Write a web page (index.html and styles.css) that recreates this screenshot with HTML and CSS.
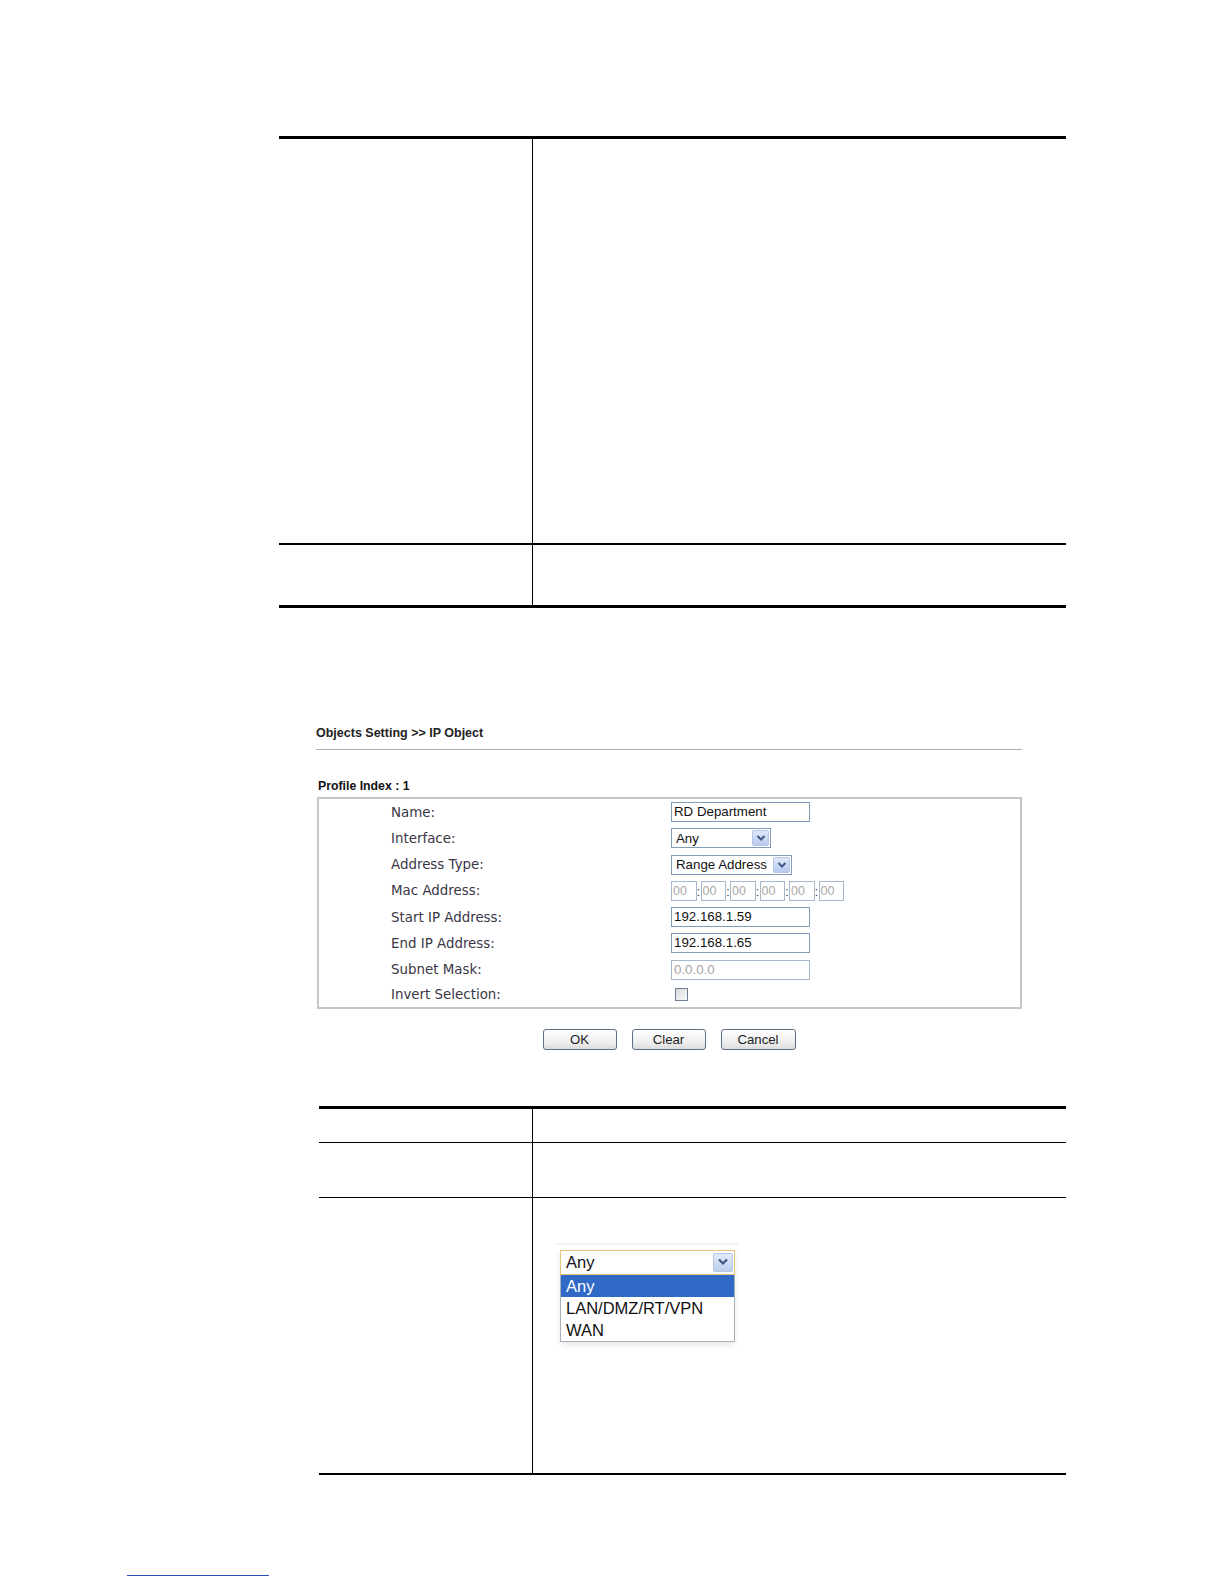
FILE: index.html
```html
<!DOCTYPE html>
<html>
<head>
<meta charset="utf-8">
<title>IP Object</title>
<link rel="stylesheet" href="styles.css">
</head>
<body>
<div class="page">
  <div class="spec spec-top">
    <div class="row r1"><div class="c1"></div><div class="c2"></div></div>
    <div class="row r2"><div class="c1"></div><div class="c2"></div></div>
  </div>

  <div class="shot">
    <div class="crumb">Objects Setting &gt;&gt; IP Object</div>
    <div class="profile">Profile Index : 1</div>
    <div class="form">
      <div class="frow"><span class="lbl">Name:</span><span class="val"><span class="field w137">RD Department</span></span></div>
      <div class="frow"><span class="lbl">Interface:</span><span class="val"><span class="sel w99"><span class="sel-text">Any</span><span class="arrow"><svg viewBox="0 0 10 8" width="10" height="8"><path d="M1.5 2 L5 5.5 L8.5 2" fill="none" stroke="#3f5584" stroke-width="2"/></svg></span></span></span></div>
      <div class="frow"><span class="lbl">Address Type:</span><span class="val"><span class="sel w119"><span class="sel-text">Range Address</span><span class="arrow"><svg viewBox="0 0 10 8" width="10" height="8"><path d="M1.5 2 L5 5.5 L8.5 2" fill="none" stroke="#3f5584" stroke-width="2"/></svg></span></span></span></div>
      <div class="frow"><span class="lbl">Mac Address:</span><span class="val mac"><span class="macbox">00</span><span class="colon">:</span><span class="macbox">00</span><span class="colon">:</span><span class="macbox">00</span><span class="colon">:</span><span class="macbox">00</span><span class="colon">:</span><span class="macbox">00</span><span class="colon">:</span><span class="macbox">00</span></span></div>
      <div class="frow"><span class="lbl">Start IP Address:</span><span class="val"><span class="field w137">192.168.1.59</span></span></div>
      <div class="frow"><span class="lbl">End IP Address:</span><span class="val"><span class="field w137">192.168.1.65</span></span></div>
      <div class="frow"><span class="lbl">Subnet Mask:</span><span class="val"><span class="field w137 disabled">0.0.0.0</span></span></div>
      <div class="frow last"><span class="lbl">Invert Selection:</span><span class="val"><span class="check"></span></span></div>
    </div>
    <div class="buttons">
      <span class="btn b74">OK</span>
      <span class="btn b74">Clear</span>
      <span class="btn b75">Cancel</span>
    </div>
  </div>

  <div class="spec spec-bottom">
    <div class="row q1"><div class="c1"></div><div class="c2"></div></div>
    <div class="row q2"><div class="c1"></div><div class="c2"></div></div>
    <div class="row q3"><div class="c1"></div>
      <div class="c2">
        <div class="dd-shot">
          <div class="dd-select"><span class="dd-text">Any</span><span class="dd-arrow"><svg viewBox="0 0 12 10" width="12" height="10"><path d="M2 2.5 L6 6.5 L10 2.5" fill="none" stroke="#3f5584" stroke-width="2.2"/></svg></span></div>
          <div class="dd-list">
            <div class="dd-item active">Any</div>
            <div class="dd-item">LAN/DMZ/RT/VPN</div>
            <div class="dd-item">WAN</div>
          </div>
        </div>
      </div>
    </div>
  </div>

  <div class="footline"></div>
</div>
</body>
</html>
```

FILE: styles.css
```css
html, body {
  margin: 0;
  padding: 0;
  background: #ffffff;
}

.page {
  width: 1224px;
  min-height: 1584px;
  padding-top: 136px;
  box-sizing: border-box;
  font-family: "Liberation Sans", Arial, sans-serif;
  overflow: hidden;
}

/* ---------- document tables ---------- */
.spec {
  border-top: 3px solid #000;
}

.row {
  display: grid;
  box-sizing: border-box;
}

.row .c1 {
  border-right: 1px solid #000;
  box-sizing: border-box;
}

.spec-top {
  margin-left: 279px;
  width: 787px;
  border-bottom: 3px solid #000;
}

.spec-top .row {
  grid-template-columns: 254px 1fr;
}

.spec-top .r1 {
  height: 406px;
  border-bottom: 2px solid #000;
}

.spec-top .r2 {
  height: 60px;
}

.spec-bottom {
  margin-top: 56px;
  margin-left: 319px;
  width: 747px;
  border-bottom: 2px solid #000;
}

.spec-bottom .row {
  grid-template-columns: 214px 1fr;
}

.spec-bottom .q1 {
  height: 34px;
  border-bottom: 1px solid #000;
}

.spec-bottom .q2 {
  height: 55px;
  border-bottom: 1px solid #000;
}

.spec-bottom .q3 {
  height: 275px;
}

.spec-bottom .q3 .c2 {
  padding: 52px 0 0 27px;
}

/* ---------- screenshot: IP Object ---------- */
.shot {
  margin-top: 118px;
  margin-left: 316px;
  width: 706px;
}

.crumb {
  font-size: 12.5px;
  font-weight: bold;
  line-height: 15px;
  color: #222;
  padding-bottom: 8px;
  border-bottom: 1px solid #b0b0b0;
}

.profile {
  margin-top: 29px;
  padding-left: 2px;
  font-size: 12.3px;
  font-weight: bold;
  line-height: 14px;
  color: #111;
}

.form {
  margin-top: 4px;
  margin-left: 1px;
  width: 705px;
  box-sizing: border-box;
  border: 2px solid #c6c6c6;
}

.frow {
  display: grid;
  grid-template-columns: 352px 1fr;
  align-items: center;
  height: 26.25px;
}

.frow.last {
  height: 24px;
  padding-bottom: 1px;
  box-sizing: border-box;
}

.lbl {
  padding-left: 72px;
  font-family: "DejaVu Sans", Verdana, sans-serif;
  font-size: 13.4px;
  color: #3a3646;
  white-space: nowrap;
}

.val {
  display: flex;
  align-items: center;
}

.field {
  display: inline-block;
  box-sizing: border-box;
  height: 20px;
  border: 1px solid #7f9db9;
  padding: 0 2px;
  font-size: 13.3px;
  line-height: 18px;
  color: #111;
  white-space: nowrap;
}

.field.disabled {
  border-color: #a7b7cc;
  color: #a4a4a4;
}

.w137 { width: 139px; }

.sel {
  display: inline-flex;
  align-items: center;
  justify-content: space-between;
  box-sizing: border-box;
  height: 20px;
  border: 1px solid #7f9db9;
  padding: 0 1px 0 4px;
  font-size: 13.3px;
  color: #111;
}

.w99 { width: 100px; }
.w119 { width: 121px; }

.sel-text {
  white-space: nowrap;
}

.arrow {
  display: flex;
  align-items: center;
  justify-content: center;
  width: 17px;
  height: 16px;
  box-sizing: border-box;
  border: 1px solid #b6c7e8;
  border-radius: 2px;
  background: linear-gradient(#dfe8fb, #b8caee);
}

.mac {
  display: flex;
}

.macbox {
  display: inline-block;
  box-sizing: border-box;
  width: 25.5px;
  height: 20px;
  border: 1px solid #a7b7cc;
  padding-left: 1px;
  font-size: 12.5px;
  line-height: 18px;
  color: #a8a8a8;
}

.colon {
  display: inline-block;
  width: 4px;
  font-size: 12px;
  line-height: 20px;
  text-align: center;
  color: #333;
  padding-top: 3px;
}

.check {
  display: inline-block;
  margin-left: 4px;
  width: 13px;
  height: 13px;
  box-sizing: border-box;
  border: 1px solid #6f7f92;
  background: linear-gradient(135deg, #d8d8d8, #fbfbfb);
}

.buttons {
  display: flex;
  justify-content: center;
  gap: 15px;
  margin-top: 20px;
}

.btn {
  display: inline-block;
  box-sizing: border-box;
  height: 21px;
  border: 1px solid #5f6f82;
  border-radius: 3px;
  background: linear-gradient(#ffffff, #ececec 70%, #dcdcdc);
  font-size: 13.2px;
  line-height: 19px;
  text-align: center;
  color: #222;
}

.b74 { width: 74px; }
.b75 { width: 75px; }

/* ---------- dropdown screenshot ---------- */
.dd-shot {
  width: 175px;
  position: relative;
  box-shadow: 0 3px 6px rgba(0, 0, 0, 0.10);
}

.dd-shot::before {
  content: "";
  position: absolute;
  left: -3px;
  right: -3px;
  top: -7px;
  height: 2px;
  background: #f0f1f4;
}

.dd-select {
  display: flex;
  align-items: center;
  justify-content: space-between;
  box-sizing: border-box;
  height: 25px;
  border: 1px solid #e3c777;
  padding: 0 1px 0 5px;
  font-size: 16.5px;
  color: #111;
}

.dd-arrow {
  display: flex;
  align-items: center;
  justify-content: center;
  width: 20px;
  height: 19px;
  box-sizing: border-box;
  border: 1px solid #b6c7e8;
  border-radius: 2px;
  background: linear-gradient(#e3ebfb, #bccdee);
}

.dd-list {
  border: 1px solid #a8b0ba;
  border-top: none;
  background: #fff;
}

.dd-item {
  height: 22px;
  line-height: 22px;
  padding-left: 5px;
  font-size: 16.5px;
  color: #111;
  white-space: nowrap;
}

.dd-item.active {
  background: #3169c6;
  color: #ffffff;
}

/* ---------- footer rule ---------- */
.footline {
  margin-top: 100px;
  margin-left: 127px;
  width: 142px;
  height: 1px;
  background: #2c4fbf;
}
```
